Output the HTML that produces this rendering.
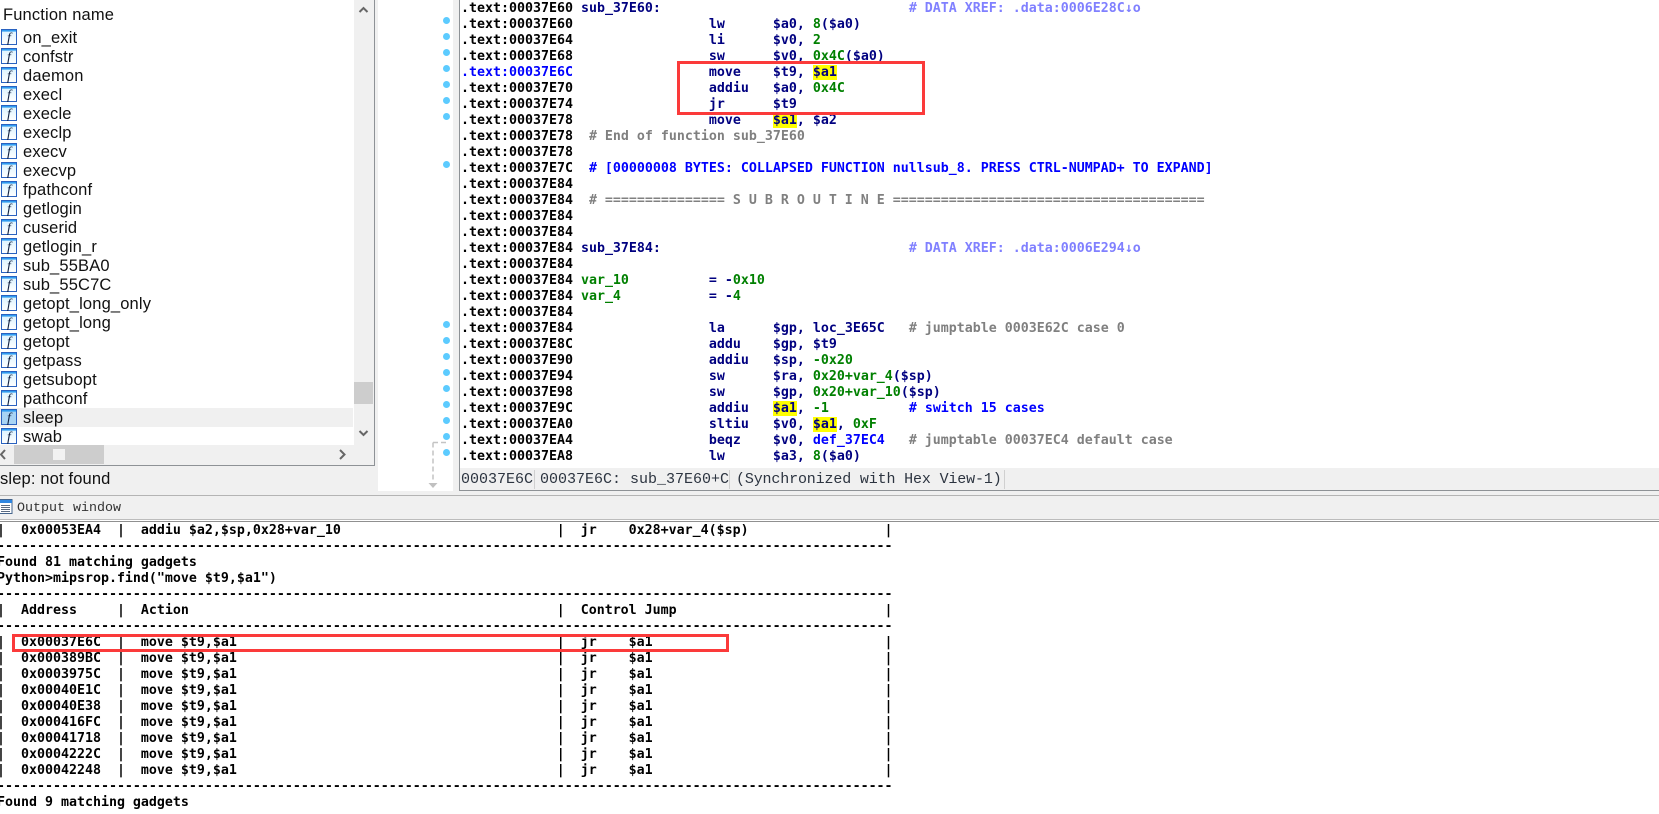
<!DOCTYPE html>
<html>
<head>
<meta charset="utf-8">
<style>
html,body{margin:0;padding:0;background:#fff;}
body{position:relative;width:1659px;height:814px;overflow:hidden;}
.a{position:absolute;}
pre{margin:0;position:absolute;font-family:"DejaVu Sans Mono","Liberation Mono",monospace;font-weight:bold;font-size:13.29px;line-height:16px;color:#000;white-space:pre;}
.n{color:#000080}.g{color:#008000}.c{color:#808080}.x{color:#8080ff}.b{color:#0000ff}
.y{background:#ffff00}
.fn{position:absolute;left:23px;font-family:"Liberation Sans",sans-serif;font-size:16.5px;letter-spacing:.15px;line-height:19px;height:19px;color:#111;white-space:pre;}
.ic{position:absolute;left:1px;width:16px;height:16px;}
.dot{position:absolute;left:443px;width:7px;height:7px;border-radius:50%;background:#5ccbff;}
.sep{position:absolute;top:470px;width:1px;height:19px;background:#d0d0d0;}
.st{position:absolute;top:469px;height:22px;line-height:21px;font-family:"Liberation Mono",monospace;font-size:15px;color:#2c3440;white-space:pre;}
.rb{position:absolute;box-sizing:border-box;border:3px solid #fb3a3a;}
</style>
</head>
<body>
<svg width="0" height="0" style="position:absolute">
<defs>
<linearGradient id="gf" x1="0" y1="0" x2="0" y2="1"><stop offset="0" stop-color="#d8f2ff"/><stop offset="1" stop-color="#ffffff"/></linearGradient>
<symbol id="fi" viewBox="0 0 16 16">
<rect x=".5" y=".5" width="15" height="15" fill="url(#gf)" stroke="#2a62c0"/>
<rect x="1" y="1" width="14" height="1.6" fill="#2f9cf0"/>
<text x="8" y="13" text-anchor="middle" font-family="Liberation Serif" font-style="italic" font-size="14" fill="#102040">f</text>
</symbol>
<symbol id="fs" viewBox="0 0 16 16">
<rect x=".5" y=".5" width="15" height="15" fill="#a8d4f4" stroke="#2a62c0"/>
<rect x="1" y="1" width="14" height="1.6" fill="#2f9cf0"/>
<text x="8" y="13" text-anchor="middle" font-family="Liberation Serif" font-style="italic" font-size="14" fill="#102040">f</text>
</symbol>
</defs>
</svg>

<!-- left panel background -->
<div class="a" style="left:0;top:0;width:378px;height:496px;background:#f0f0f0"></div>
<div class="a" style="left:0;top:0;width:354px;height:445px;background:#fff"></div>
<div class="a" style="left:0;top:408px;width:353px;height:19px;background:#f0f0f0"></div>
<div class="a" style="left:374px;top:0;width:1px;height:466px;background:#8e9296"></div>
<div class="a" style="left:0;top:465px;width:375px;height:1px;background:#8e9296"></div>

<div class="fn" style="left:3px;top:6px">Function name</div>

<svg class="ic" style="top:29px"><use href="#fi"/></svg><div class="fn" style="top:28.5px">on_exit</div>
<svg class="ic" style="top:48px"><use href="#fi"/></svg><div class="fn" style="top:47.5px">confstr</div>
<svg class="ic" style="top:67px"><use href="#fi"/></svg><div class="fn" style="top:66.5px">daemon</div>
<svg class="ic" style="top:86px"><use href="#fi"/></svg><div class="fn" style="top:85.5px">execl</div>
<svg class="ic" style="top:105px"><use href="#fi"/></svg><div class="fn" style="top:104.5px">execle</div>
<svg class="ic" style="top:124px"><use href="#fi"/></svg><div class="fn" style="top:123.5px">execlp</div>
<svg class="ic" style="top:143px"><use href="#fi"/></svg><div class="fn" style="top:142.5px">execv</div>
<svg class="ic" style="top:162px"><use href="#fi"/></svg><div class="fn" style="top:161.5px">execvp</div>
<svg class="ic" style="top:181px"><use href="#fi"/></svg><div class="fn" style="top:180.5px">fpathconf</div>
<svg class="ic" style="top:200px"><use href="#fi"/></svg><div class="fn" style="top:199.5px">getlogin</div>
<svg class="ic" style="top:219px"><use href="#fi"/></svg><div class="fn" style="top:218.5px">cuserid</div>
<svg class="ic" style="top:238px"><use href="#fi"/></svg><div class="fn" style="top:237.5px">getlogin_r</div>
<svg class="ic" style="top:257px"><use href="#fi"/></svg><div class="fn" style="top:256.5px">sub_55BA0</div>
<svg class="ic" style="top:276px"><use href="#fi"/></svg><div class="fn" style="top:275.5px">sub_55C7C</div>
<svg class="ic" style="top:295px"><use href="#fi"/></svg><div class="fn" style="top:294.5px">getopt_long_only</div>
<svg class="ic" style="top:314px"><use href="#fi"/></svg><div class="fn" style="top:313.5px">getopt_long</div>
<svg class="ic" style="top:333px"><use href="#fi"/></svg><div class="fn" style="top:332.5px">getopt</div>
<svg class="ic" style="top:352px"><use href="#fi"/></svg><div class="fn" style="top:351.5px">getpass</div>
<svg class="ic" style="top:371px"><use href="#fi"/></svg><div class="fn" style="top:370.5px">getsubopt</div>
<svg class="ic" style="top:390px"><use href="#fi"/></svg><div class="fn" style="top:389.5px">pathconf</div>
<svg class="ic" style="top:409px"><use href="#fs"/></svg><div class="fn" style="top:408.5px">sleep</div>
<svg class="ic" style="top:428px;height:16px"><use href="#fi"/></svg><div class="fn" style="top:427.5px;height:17px;overflow:hidden">swab</div>

<!-- scrollbars -->
<div class="a" style="left:354px;top:382px;width:19px;height:22px;background:#cdcdcd"></div>
<div class="a" style="left:14px;top:445px;width:90px;height:19px;background:#cdcdcd"></div>
<div class="a" style="left:53px;top:449px;width:12px;height:11px;background:#f2f2f2"></div>
<svg class="a" style="left:0;top:0" width="375" height="466" fill="none" stroke="#666" stroke-width="2">
<path d="M359.5 12 L363.5 8 L367.5 12"/>
<path d="M359.5 431 L363.5 435 L367.5 431"/>
<path d="M5 450 L1 454.5 L5 459"/>
<path d="M340 450 L344.5 454.5 L340 459"/>
</svg>
<div class="fn" style="left:0;top:470px">slep: not found</div>

<!-- gutter -->
<div class="a" style="left:453px;top:0;width:6px;height:491px;background:#f0f0f0"></div>
<div class="a" style="left:459px;top:0;width:1px;height:491px;background:#8e9296"></div>
<div class="dot" style="top:17px"></div>
<div class="dot" style="top:33px"></div>
<div class="dot" style="top:49px"></div>
<div class="dot" style="top:65px"></div>
<div class="dot" style="top:81px"></div>
<div class="dot" style="top:97px"></div>
<div class="dot" style="top:113px"></div>
<div class="dot" style="top:161px"></div>
<div class="dot" style="top:321px"></div>
<div class="dot" style="top:337px"></div>
<div class="dot" style="top:353px"></div>
<div class="dot" style="top:369px"></div>
<div class="dot" style="top:385px"></div>
<div class="dot" style="top:401px"></div>
<div class="dot" style="top:417px"></div>
<div class="dot" style="top:433px"></div>
<div class="dot" style="top:449px"></div>
<svg class="a" style="left:425px;top:438px" width="26" height="52" fill="none">
<path d="M8 4.5 H22 M8 4.5 V44" stroke="#c4c4c4" stroke-width="1.5" stroke-dasharray="5 3"/>
<path d="M3.5 45 H12.5 L8 50 Z" fill="#c0c0c0"/>
</svg>

<!-- disassembly -->
<pre style="left:461px;top:1px">.text:00037E60 <span class="n">sub_37E60:</span>                               <span class="x"># DATA XREF: .data:0006E28C↓o</span>
.text:00037E60                 <span class="n">lw      $a0, </span><span class="g">8</span><span class="n">($a0)</span>
.text:00037E64                 <span class="n">li      $v0, </span><span class="g">2</span>
.text:00037E68                 <span class="n">sw      $v0, </span><span class="g">0x4C</span><span class="n">($a0)</span>
<span class="b">.text:00037E6C</span>                 <span class="n">move    $t9, </span><span class="n y">$a1</span>
.text:00037E70                 <span class="n">addiu   $a0, </span><span class="g">0x4C</span>
.text:00037E74                 <span class="n">jr      $t9</span>
.text:00037E78                 <span class="n">move    </span><span class="n y">$a1</span><span class="n">, $a2</span>
.text:00037E78  <span class="c"># End of function sub_37E60</span>
.text:00037E78
.text:00037E7C  <span class="b"># [00000008 BYTES: COLLAPSED FUNCTION nullsub_8. PRESS CTRL-NUMPAD+ TO EXPAND]</span>
.text:00037E84
.text:00037E84  <span class="c"># =============== S U B R O U T I N E =======================================</span>
.text:00037E84
.text:00037E84
.text:00037E84 <span class="n">sub_37E84:</span>                               <span class="x"># DATA XREF: .data:0006E294↓o</span>
.text:00037E84
.text:00037E84 <span class="g">var_10</span>          <span class="n">= -</span><span class="g">0x10</span>
.text:00037E84 <span class="g">var_4</span>           <span class="n">= -</span><span class="g">4</span>
.text:00037E84
.text:00037E84                 <span class="n">la      $gp, loc_3E65C</span>   <span class="c"># jumptable 0003E62C case 0</span>
.text:00037E8C                 <span class="n">addu    $gp, $t9</span>
.text:00037E90                 <span class="n">addiu   $sp, </span><span class="g">-0x20</span>
.text:00037E94                 <span class="n">sw      $ra, </span><span class="g">0x20+var_4</span><span class="n">($sp)</span>
.text:00037E98                 <span class="n">sw      $gp, </span><span class="g">0x20+var_10</span><span class="n">($sp)</span>
.text:00037E9C                 <span class="n">addiu   </span><span class="n y">$a1</span><span class="n">, </span><span class="g">-1</span>          <span class="b"># switch 15 cases</span>
.text:00037EA0                 <span class="n">sltiu   $v0, </span><span class="n y">$a1</span><span class="n">, </span><span class="g">0xF</span>
.text:00037EA4                 <span class="n">beqz    $v0, </span><span class="b">def_37EC4</span>   <span class="c"># jumptable 00037EC4 default case</span>
.text:00037EA8                 <span class="n">lw      $a3, </span><span class="g">8</span><span class="n">($a0)</span></pre>

<!-- status bar -->
<div class="a" style="left:460px;top:468px;width:1199px;height:22px;background:#f0f0f0"></div>
<div class="st" style="left:461px">00037E6C</div>
<div class="sep" style="left:534px"></div>
<div class="st" style="left:540px">00037E6C: sub_37E60+C</div>
<div class="sep" style="left:729px"></div>
<div class="st" style="left:736px;letter-spacing:-.15px">(Synchronized with Hex View-1)</div>
<div class="sep" style="left:1004px"></div>
<div class="a" style="left:459px;top:490px;width:1200px;height:1px;background:#8e9296"></div>

<!-- output window header -->
<div class="a" style="left:0;top:491px;width:1659px;height:30px;background:#f0f0f0"></div>
<div class="a" style="left:0;top:495px;width:1659px;height:1px;background:#b4b4b4"></div>
<div class="a" style="left:0;top:519px;width:1659px;height:1px;background:#bcbcbc"></div>
<div class="a" style="left:0;top:520px;width:1659px;height:1px;background:#fff"></div>
<div class="a" style="left:0;top:521px;width:1659px;height:1px;background:#909090"></div>
<svg class="a" style="left:0;top:499px" width="13" height="16">
<rect x="-1" y=".5" width="13" height="14" fill="#fff" stroke="#44648c"/>
<rect x="0" y="1" width="12" height="3" fill="#2f86e0"/>
<path d="M1 6.5H10M1 8.5H10M1 10.5H10M1 12.5H10" stroke="#5a6a80"/>
</svg>
<div class="a" style="left:17px;top:501px;height:16px;line-height:16px;font-family:'Liberation Mono',monospace;font-size:13.33px;color:#333;white-space:pre">Output window</div>

<!-- output -->
<pre style="left:-3px;top:523px">|  0x00053EA4  |  addiu $a2,$sp,0x28+var_10                           |  jr    0x28+var_4($sp)                 |
----------------------------------------------------------------------------------------------------------------
Found 81 matching gadgets
Python&gt;mipsrop.find("move $t9,$a1")
----------------------------------------------------------------------------------------------------------------
|  Address     |  Action                                              |  Control Jump                          |
----------------------------------------------------------------------------------------------------------------
|  0x00037E6C  |  move $t9,$a1                                        |  jr    $a1                             |
|  0x000389BC  |  move $t9,$a1                                        |  jr    $a1                             |
|  0x0003975C  |  move $t9,$a1                                        |  jr    $a1                             |
|  0x00040E1C  |  move $t9,$a1                                        |  jr    $a1                             |
|  0x00040E38  |  move $t9,$a1                                        |  jr    $a1                             |
|  0x000416FC  |  move $t9,$a1                                        |  jr    $a1                             |
|  0x00041718  |  move $t9,$a1                                        |  jr    $a1                             |
|  0x0004222C  |  move $t9,$a1                                        |  jr    $a1                             |
|  0x00042248  |  move $t9,$a1                                        |  jr    $a1                             |
----------------------------------------------------------------------------------------------------------------
Found 9 matching gadgets</pre>

<!-- red annotation boxes -->
<div class="rb" style="left:677px;top:61px;width:248px;height:54px"></div>
<div class="rb" style="left:12px;top:634px;width:717px;height:18px"></div>
</body>
</html>
